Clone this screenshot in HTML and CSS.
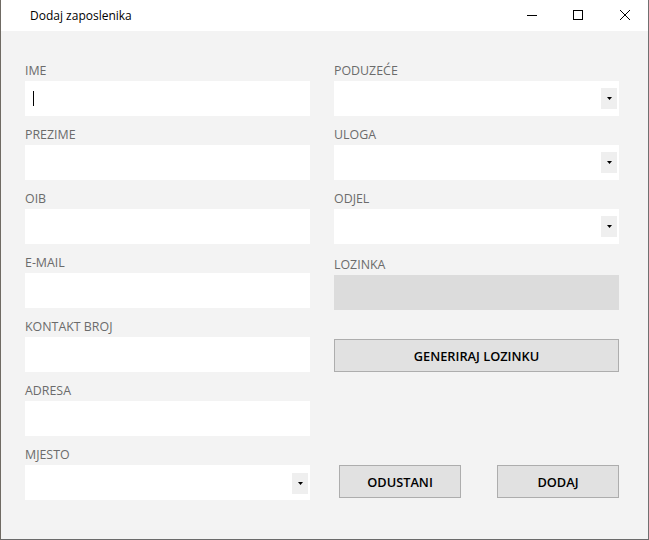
FILE: index.html
```html
<!DOCTYPE html>
<html lang="hr">
<head>
<meta charset="utf-8">
<title>Dodaj zaposlenika</title>
<link rel="stylesheet" href="styles.css">
</head>
<body>
<div class="window">
  <header class="titlebar">
    <span class="title">Dodaj zaposlenika</span>
    <div class="controls">
      <span class="ctl"><svg width="10" height="10" viewBox="0 0 10 10"><path d="M0 5.5h10" stroke="#000" stroke-width="1"/></svg></span>
      <span class="ctl"><svg width="10" height="10" viewBox="0 0 10 10"><rect x="0.5" y="0.5" width="9" height="9" fill="none" stroke="#000" stroke-width="1"/></svg></span>
      <span class="ctl ctl-close"><svg width="10" height="10" viewBox="0 0 10 10"><path d="M0 0L10 10M10 0L0 10" stroke="#000" stroke-width="1"/></svg></span>
    </div>
  </header>
  <main class="form">
    <div class="col">
      <div class="field"><label class="label">IME</label><div class="input"><span class="caret"></span></div></div>
      <div class="field"><label class="label">PREZIME</label><div class="input"></div></div>
      <div class="field"><label class="label">OIB</label><div class="input"></div></div>
      <div class="field"><label class="label">E-MAIL</label><div class="input"></div></div>
      <div class="field"><label class="label">KONTAKT BROJ</label><div class="input"></div></div>
      <div class="field"><label class="label">ADRESA</label><div class="input"></div></div>
      <div class="field"><label class="label">MJESTO</label><div class="input select"><span class="arrow arrow-low"><svg width="5" height="3" viewBox="0 0 5 3"><path d="M0 0h5L2.5 3z" fill="#000"/></svg></span></div></div>
    </div>
    <div class="col">
      <div class="field"><label class="label">PODUZEĆE</label><div class="input select"><span class="arrow"><svg width="5" height="3" viewBox="0 0 5 3"><path d="M0 0h5L2.5 3z" fill="#000"/></svg></span></div></div>
      <div class="field"><label class="label">ULOGA</label><div class="input select"><span class="arrow"><svg width="5" height="3" viewBox="0 0 5 3"><path d="M0 0h5L2.5 3z" fill="#000"/></svg></span></div></div>
      <div class="field"><label class="label">ODJEL</label><div class="input select"><span class="arrow"><svg width="5" height="3" viewBox="0 0 5 3"><path d="M0 0h5L2.5 3z" fill="#000"/></svg></span></div></div>
      <div class="field field-password"><label class="label">LOZINKA</label><div class="input disabled"></div></div>
      <button class="btn btn-wide">GENERIRAJ LOZINKU</button>
      <div class="actions">
        <button class="btn btn-small">ODUSTANI</button>
        <button class="btn btn-small">DODAJ</button>
      </div>
    </div>
  </main>
</div>
</body>
</html>
```

FILE: styles.css
```css
* { box-sizing: border-box; }

html, body {
  margin: 0;
  padding: 0;
  background: #6e6e6e;
}

body {
  font-family: "Open Sans", "Noto Sans", sans-serif;
  font-size: 12px;
  color: #000;
}

.window {
  width: 649px;
  height: 540px;
  display: flex;
  flex-direction: column;
  background: #f3f3f3;
  border-left: 1px solid #6f6a63;
  border-right: 1px solid #707070;
  border-bottom: 1px solid #6a6a6a;
}

.titlebar {
  height: 31px;
  flex: 0 0 31px;
  background: #fff;
  display: flex;
  align-items: flex-start;
  justify-content: space-between;
}

.title {
  padding-left: 29px;
  padding-top: 1px;
  line-height: 30px;
  font-size: 12px;
  color: #000;
}

.controls {
  display: flex;
  padding-right: 1px;
}

.ctl {
  width: 46px;
  height: 30px;
  display: flex;
  align-items: center;
  justify-content: center;
}

.ctl-close { padding-left: 1px; }

.ctl svg { display: block; }

.form {
  flex: 1;
  display: grid;
  grid-template-columns: 285px 285px;
  column-gap: 24px;
  padding: 31px 28px 0 24px;
}

.col {
  display: flex;
  flex-direction: column;
  gap: 10px;
}

.field {
  display: flex;
  flex-direction: column;
  gap: 2px;
}

.field-password { margin-top: 2px; }

.label {
  height: 17px;
  line-height: 16px;
  padding-top: 1px;
  color: #6b6b6b;
  font-size: 12.4px;
}

.input {
  height: 35px;
  background: #fff;
  display: flex;
  align-items: center;
  padding-left: 8px;
}

.input.select {
  justify-content: flex-end;
  padding-right: 2px;
}

.input.disabled {
  background: #dcdcdc;
}

.caret {
  width: 1px;
  height: 15px;
  background: #000;
}

.arrow {
  width: 16px;
  height: 21px;
  background: #efefef;
  display: flex;
  align-items: center;
  justify-content: center;
}

.arrow-low { margin-top: 2px; }

.arrow svg { display: block; }

.btn {
  font-family: "Open Sans", "Noto Sans", sans-serif;
  font-size: 12.8px;
  font-weight: 600;
  color: #000;
  background: #e1e1e1;
  border: 1px solid #adadad;
  border-radius: 0;
  height: 33px;
  padding: 0;
  margin: 0;
}

.btn-wide {
  width: 285px;
  margin-top: 19px;
}

.actions {
  display: flex;
  justify-content: space-between;
  padding-left: 5px;
  margin-top: 83px;
}

.btn-small { width: 122px; }
```
